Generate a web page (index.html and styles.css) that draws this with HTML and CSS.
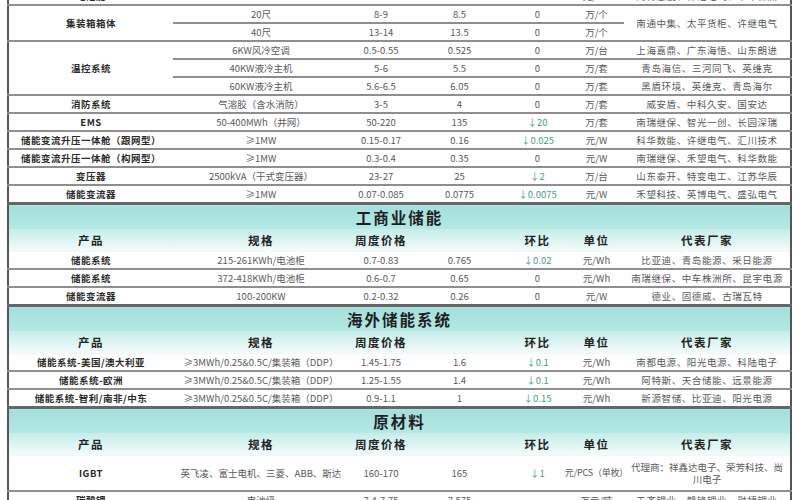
FILE: index.html
```html
<!DOCTYPE html>
<html lang="zh">
<head>
<meta charset="utf-8">
<title>储能产业链价格</title>
<link rel="stylesheet" href="styles.css">
</head>
<body>
<table class="sheet">
  <colgroup>
    <col class="c-prod"><col class="c-spec"><col class="c-range"><col class="c-mid"><col class="c-chg"><col class="c-unit"><col class="c-vend">
  </colgroup>
  <tbody class="top">
    <tr><td class="p">电池舱</td><td>5MWh</td><td>0.6-0.64</td><td>0.62</td><td>0</td><td>元/Wh</td><td class="v">海博思创、许继电气、中车株洲</td></tr>
    <tr><td class="p" rowspan="2">集装箱箱体</td><td>20尺</td><td>8-9</td><td>8.5</td><td>0</td><td>万/个</td><td class="v" rowspan="2">南通中集、太平货柜、许继电气</td></tr>
    <tr><td>40尺</td><td>13-14</td><td>13.5</td><td>0</td><td>万/个</td></tr>
    <tr><td class="p" rowspan="3">温控系统</td><td>6KW风冷空调</td><td>0.5-0.55</td><td>0.525</td><td>0</td><td>万/台</td><td class="v">上海嘉鼎、广东海悟、山东朗进</td></tr>
    <tr><td>40KW液冷主机</td><td>5-6</td><td>5.5</td><td>0</td><td>万/套</td><td class="v">青岛海信、三河同飞、英维克</td></tr>
    <tr><td>60KW液冷主机</td><td>5.6-6.5</td><td>6.05</td><td>0</td><td>万/套</td><td class="v">黑盾环境、英维克、青岛海尔</td></tr>
    <tr><td class="p">消防系统</td><td>气溶胶（含水消防）</td><td>3-5</td><td>4</td><td>0</td><td>万/套</td><td class="v">威安盾、中科久安、国安达</td></tr>
    <tr><td class="p">EMS</td><td>50-400MWh（并网）</td><td>50-220</td><td>135</td><td class="down">↓20</td><td>万/套</td><td class="v">南瑞继保、智光一创、长园深瑞</td></tr>
    <tr><td class="p">储能变流升压一体舱（跟网型）</td><td>≥1MW</td><td>0.15-0.17</td><td>0.16</td><td class="down">↓0.025</td><td>元/W</td><td class="v">科华数能、许继电气、汇川技术</td></tr>
    <tr><td class="p">储能变流升压一体舱（构网型）</td><td>≥1MW</td><td>0.3-0.4</td><td>0.35</td><td>0</td><td>元/W</td><td class="v">南瑞继保、禾望电气、科华数能</td></tr>
    <tr><td class="p">变压器</td><td>2500kVA（干式变压器）</td><td>23-27</td><td>25</td><td class="down">↓2</td><td>万/台</td><td class="v">山东泰开、特变电工、江苏华辰</td></tr>
    <tr><td class="p">储能变流器</td><td>≥1MW</td><td>0.07-0.085</td><td>0.0775</td><td class="down">↓0.0075</td><td>元/W</td><td class="v">禾望科技、英博电气、盛弘电气</td></tr>
  </tbody>
  <tbody class="sec">
    <tr class="title"><td colspan="7">工商业储能</td></tr>
    <tr class="head"><th>产品</th><th>规格</th><th>周度价格</th><th></th><th>环比</th><th>单位</th><th>代表厂家</th></tr>
    <tr><td class="p">储能系统</td><td>215-261KWh/电池柜</td><td>0.7-0.83</td><td>0.765</td><td class="down">↓0.02</td><td>元/Wh</td><td class="v">比亚迪、青岛能源、采日能源</td></tr>
    <tr><td class="p">储能系统</td><td>372-418KWh/电池柜</td><td>0.6-0.7</td><td>0.65</td><td>0</td><td>元/Wh</td><td class="v">南瑞继保、中车株洲所、昆宇电源</td></tr>
    <tr><td class="p">储能变流器</td><td>100-200KW</td><td>0.2-0.32</td><td>0.26</td><td>0</td><td>元/W</td><td class="v">德业、固德威、古瑞瓦特</td></tr>
  </tbody>
  <tbody class="sec">
    <tr class="title"><td colspan="7">海外储能系统</td></tr>
    <tr class="head"><th>产品</th><th>规格</th><th>周度价格</th><th></th><th>环比</th><th>单位</th><th>代表厂家</th></tr>
    <tr><td class="p">储能系统-美国/澳大利亚</td><td>≥3MWh/0.25&amp;0.5C/集装箱（DDP）</td><td>1.45-1.75</td><td>1.6</td><td class="down">↓0.1</td><td>元/Wh</td><td class="v">南都电源、阳光电源、科陆电子</td></tr>
    <tr><td class="p">储能系统-欧洲</td><td>≥3MWh/0.25&amp;0.5C/集装箱（DDP）</td><td>1.25-1.55</td><td>1.4</td><td class="down">↓0.1</td><td>元/Wh</td><td class="v">阿特斯、天合储能、远景能源</td></tr>
    <tr><td class="p">储能系统-智利/南非/中东</td><td>≥3MWh/0.25&amp;0.5C/集装箱（DDP）</td><td>0.9-1.1</td><td>1</td><td class="down">↓0.15</td><td>元/Wh</td><td class="v">新源智储、比亚迪、阳光电源</td></tr>
  </tbody>
  <tbody class="sec">
    <tr class="title"><td colspan="7">原材料</td></tr>
    <tr class="head"><th>产品</th><th>规格</th><th>周度价格</th><th></th><th>环比</th><th>单位</th><th>代表厂家</th></tr>
    <tr class="tall"><td class="p">IGBT</td><td>英飞凌、富士电机、三菱、ABB、斯达</td><td>160-170</td><td>165</td><td class="down">↓1</td><td class="u"><span class="squeeze">元/PCS（单枚）</span></td><td class="v wrap">代理商：祥鑫达电子、荣芳科技、尚川电子</td></tr>
    <tr><td class="p">碳酸锂</td><td>电池级</td><td>7.4-7.75</td><td>7.575</td><td>-</td><td>万元/吨</td><td class="v">天齐锂业、赣锋锂业、融捷锂业</td></tr>
  </tbody>
</table>
</body>
</html>
```

FILE: styles.css
```css
html, body {
  margin: 0;
  padding: 0;
  background: #ffffff;
}

body {
  font-family: "Noto Sans CJK SC", "Noto Sans", "Liberation Sans", sans-serif;
  overflow: hidden;
}

.sheet {
  margin: -12px 0 0 7px;
  width: 783px;
  table-layout: fixed;
  border-collapse: collapse;
  border-left: 2px solid #555;
  border-right: 2px solid #555;
}

.c-prod { width: 165px; }
.c-spec { width: 176px; }
.c-range { width: 64px; }
.c-mid { width: 93px; }
.c-chg { width: 63px; }
.c-unit { width: 55px; }
.c-vend { width: 167px; }

.sheet td {
  height: 16px;
  padding: 0 2px;
  text-align: center;
  vertical-align: middle;
  font-size: 9.5px;
  line-height: 12px;
  color: #5a5a5a;
  white-space: nowrap;
  overflow: hidden;
  border-bottom: 2px solid #8e8e8e;
}

.sheet td.p {
  color: #2a2a2a;
  font-weight: 700;
  letter-spacing: 0.5px;
}

.sheet td.v {
  letter-spacing: 0.6px;
}

.sheet td.down {
  color: #46a37e;
}

.sheet td.u {
  overflow: visible;
  font-size: 9px;
}

.squeeze {
  display: inline-block;
  margin: 0 -8px;
  letter-spacing: -0.2px;
}

.top tr:last-child td {
  border-bottom: 3px solid #666;
}

.sec .title td {
  height: 24px;
  padding: 0;
  background: linear-gradient(#a3dfdb, #b4e8e4);
  color: #1f1f1f;
  font-size: 15.5px;
  font-weight: 700;
  letter-spacing: 2px;
  border-bottom: none;
  line-height: 22px;
}

.sec .head th {
  height: 22px;
  padding: 0;
  background: linear-gradient(#c4ede9, #f4fcfb);
  color: #222;
  font-size: 11.5px;
  font-weight: 700;
  letter-spacing: 1.5px;
  border-bottom: 1px solid #eef8f8;
}

.sec tr:last-child td {
  border-bottom: 3px solid #666;
}

.sheet tr.tall td {
  height: 34px;
}

.sheet td.wrap {
  white-space: normal;
  letter-spacing: 0;
  line-height: 12px;
  padding: 0 5px;
}
```
